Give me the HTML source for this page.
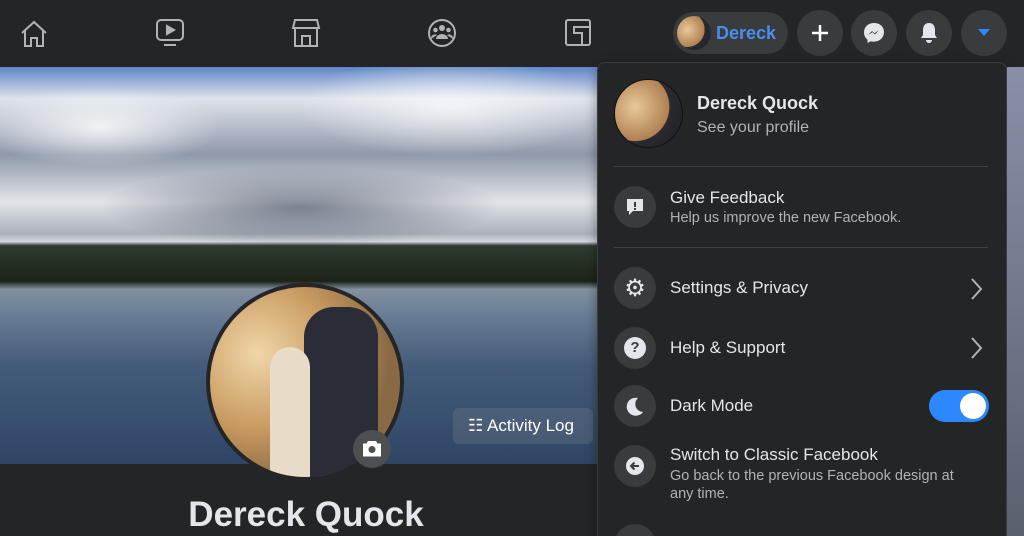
<!DOCTYPE html><html><head><style>
*{margin:0;padding:0;box-sizing:border-box}
html,body{width:1024px;height:536px;overflow:hidden}
body{background:#242526;font-family:"Liberation Sans",sans-serif;position:relative;color:#e4e6eb}
.abs{position:absolute}
.cover{left:0;top:67px;width:600px;height:397px;background:
radial-gradient(ellipse 120px 40px at 100px 60px,rgba(255,255,255,.8),transparent),
radial-gradient(ellipse 150px 50px at 450px 40px,rgba(255,255,255,.7),transparent),
radial-gradient(ellipse 200px 40px at 300px 140px,rgba(60,70,90,.6),transparent),
linear-gradient(180deg,#5f86c8 0%,#dfe3ea 8%,#9099aa 22%,#e2e4e8 34%,#aab0bb 42%,#d4d7dc 44%,#303a30 45%,#1c2418 54%,#8390a0 56%,#6a7f96 62%,#445c7a 75%,#2f4566 100%)}
.circ{border-radius:50%;background:#3a3b3c}
.avatar{background:radial-gradient(circle at 30% 40%,#e8c89a,#b08050 55%,#2a2a30 56%,#1c1c24)}
.row{left:614px;display:flex;align-items:center}
.ic{width:42px;height:42px;border-radius:50%;background:#3a3b3c;margin-right:14px;display:flex;align-items:center;justify-content:center;flex:none}
.t{font-size:17px;color:#e4e6eb}
.s{font-size:14.5px;color:#b0b3b8;margin-top:2px}
</style></head><body>
<svg class="abs" style="left:18px;top:18px" width="32" height="32" viewBox="0 0 32 32" fill="none" stroke="#b0b3b8" stroke-width="2"><path d="M4 15 L16 4 L28 15 M7 13 V28 H13 V20 H19 V28 H25 V13"/></svg>
<svg class="abs" style="left:154px;top:18px" width="32" height="30" viewBox="0 0 32 30" fill="none" stroke="#b0b3b8" stroke-width="2"><rect x="3" y="2" width="26" height="20" rx="4"/><path d="M10 27H22"/><path d="M13 8 L20 12 L13 16Z" fill="#b0b3b8"/></svg>
<svg class="abs" style="left:290px;top:18px" width="32" height="30" viewBox="0 0 32 30" fill="none" stroke="#b0b3b8" stroke-width="2"><path d="M5 2H27L29 10H3Z M5 11V28H27V11 M12 28V18H20V28"/></svg>
<svg class="abs" style="left:426px;top:17px" width="32" height="32" viewBox="0 0 32 32"><circle cx="16" cy="16" r="13" fill="none" stroke="#b0b3b8" stroke-width="2"/><circle cx="16" cy="11" r="3" fill="#b0b3b8"/><circle cx="9.5" cy="13" r="2.3" fill="#b0b3b8"/><circle cx="22.5" cy="13" r="2.3" fill="#b0b3b8"/><path d="M10 22a6 5 0 0 1 12 0Z M5 22a4 4 0 0 1 6-4 M27 22a4 4 0 0 0-6-4" fill="#b0b3b8"/></svg>
<svg class="abs" style="left:564px;top:18px" width="28" height="30" viewBox="0 0 28 30" fill="none" stroke="#b0b3b8" stroke-width="2"><rect x="2" y="2" width="24" height="25" rx="2"/><path d="M18 27V15H10V9H26"/></svg>
<div class="abs" style="left:673px;top:12px;width:115px;height:42px;border-radius:21px;background:#3a3b3c"></div>
<div class="abs circ avatar" style="left:677px;top:16px;width:34px;height:34px"></div>
<div class="abs" style="left:716px;top:23px;font-size:18px;font-weight:bold;color:#4a8ef0">Dereck</div>
<div class="abs circ" style="left:797px;top:10px;width:46px;height:46px"></div>
<svg class="abs" style="left:810px;top:23px" width="20" height="20" viewBox="0 0 20 20"><path d="M10 2V18M2 10H18" stroke="#fff" stroke-width="2.5"/></svg>
<div class="abs circ" style="left:851px;top:10px;width:46px;height:46px"></div>
<svg class="abs" style="left:863px;top:22px" width="22" height="22" viewBox="0 0 22 22"><path d="M11 1C5 1 1 5 1 10.5c0 3 1.3 5.5 3.5 7.2V21l3.3-1.8c1 .3 2 .4 3.2.4 6 0 10-4.3 10-9.6S17 1 11 1z" fill="#e4e6eb"/><path d="M5 13l4-4 2.5 2.3L16 8l-4 4.5-2.5-2.3z" fill="#3a3b3c"/></svg>
<div class="abs circ" style="left:906px;top:10px;width:46px;height:46px"></div>
<svg class="abs" style="left:919px;top:22px" width="20" height="22" viewBox="0 0 20 22"><path d="M10 1C6 1 4 4 4 8v5l-2 3h16l-2-3V8c0-4-2-7-6-7z M7 18a3 3 0 0 0 6 0z" fill="#e4e6eb"/></svg>
<div class="abs circ" style="left:961px;top:10px;width:46px;height:46px"></div>
<svg class="abs" style="left:977px;top:28px" width="14" height="9" viewBox="0 0 14 9"><path d="M1 1H13L7 8Z" fill="#2d88ff"/></svg>
<div class="abs cover"></div>
<div class="abs" style="left:453px;top:408px;width:140px;height:36px;background:rgba(120,130,140,.3);border-radius:6px"></div>
<div class="abs" style="left:468px;top:416px;font-size:17px;color:#fff">☷ Activity Log</div>
<div class="abs" style="left:0;top:464px;width:600px;height:72px;background:#242526"></div>
<div class="abs" style="left:206px;top:283px;width:198px;height:198px;border:4px solid #242526;border-radius:50%;overflow:hidden;background:radial-gradient(circle at 25% 35%,#f0d7a8,#c89a60 40%,#8a6a44 70%)">
<div class="abs" style="left:94px;top:20px;width:74px;height:190px;background:#2a2c38;border-radius:30px 30px 0 0"></div>
<div class="abs" style="left:60px;top:60px;width:40px;height:140px;background:#e8dcc8;border-radius:20px 20px 0 0"></div>
</div>
<div class="abs circ" style="left:353px;top:430px;width:38px;height:38px;background:#4e4f50"></div>
<svg class="abs" style="left:362px;top:440px" width="20" height="17" viewBox="0 0 20 17"><path d="M6 1h8l1.5 2.5H19v13H1v-13h3.5z" fill="#fff"/><circle cx="10" cy="9.5" r="3.5" fill="#4e4f50"/></svg>
<div class="abs" style="left:0;top:495px;width:612px;text-align:center;font-size:35px;font-weight:bold;color:#e4e6eb">Dereck Quock</div>
<div class="abs" style="left:597px;top:62px;width:410px;height:490px;background:#242526;border:1px solid #3a3b3c;border-radius:8px;box-shadow:0 4px 12px rgba(0,0,0,.4)"></div>
<div class="abs" style="left:1007px;top:67px;width:17px;height:469px;background:linear-gradient(#8a8fa8,#5a6070)"></div>
<div class="abs circ avatar" style="left:614px;top:79px;width:69px;height:69px;border:1px solid #111"></div>
<div class="abs" style="left:697px;top:93px;font-size:18px;font-weight:bold">Dereck Quock</div>
<div class="abs" style="left:697px;top:119px;font-size:16px;color:#b0b3b8">See your profile</div>
<div class="abs" style="left:614px;top:166px;width:374px;height:1px;background:#3e4042"></div>
<div class="abs row" style="top:186px"><div class="ic"><svg width="20" height="20" viewBox="0 0 20 20"><path d="M2 2h16v12H8l-4 4v-4H2z" fill="#e4e6eb"/><rect x="9" y="5" width="2" height="5" fill="#3a3b3c"/><rect x="9" y="11" width="2" height="2" fill="#3a3b3c"/></svg></div><div><div class="t">Give Feedback</div><div class="s">Help us improve the new Facebook.</div></div></div>
<div class="abs" style="left:614px;top:247px;width:374px;height:1px;background:#3e4042"></div>
<div class="abs row" style="top:267px"><div class="ic"><span style="font-size:24px;color:#e4e6eb">⚙</span></div><div class="t">Settings &amp; Privacy</div></div>
<svg class="abs" style="left:968px;top:277px" width="16" height="24" viewBox="0 0 16 24"><path d="M4 2l9 10-9 10" stroke="#b0b3b8" stroke-width="2" fill="none"/></svg>
<div class="abs row" style="top:327px"><div class="ic"><div style="width:22px;height:22px;border-radius:50%;background:#e4e6eb;color:#3a3b3c;font-weight:bold;font-size:15px;text-align:center;line-height:22px">?</div></div><div class="t">Help &amp; Support</div></div>
<svg class="abs" style="left:968px;top:336px" width="16" height="24" viewBox="0 0 16 24"><path d="M4 2l9 10-9 10" stroke="#b0b3b8" stroke-width="2" fill="none"/></svg>
<div class="abs row" style="top:385px"><div class="ic"><svg width="20" height="20" viewBox="0 0 20 20"><path d="M13 2a9 9 0 1 0 5 14A8 8 0 0 1 13 2z" fill="#e4e6eb"/></svg></div><div class="t">Dark Mode</div></div>
<div class="abs" style="left:929px;top:390px;width:60px;height:32px;border-radius:16px;background:#2d88ff"></div>
<div class="abs" style="left:960px;top:393px;width:26px;height:26px;border-radius:50%;background:#fff"></div>
<div class="abs row" style="top:445px;align-items:flex-start"><div class="ic"><svg width="20" height="20" viewBox="0 0 20 20"><circle cx="10" cy="10" r="9" fill="#e4e6eb"/><path d="M14 10H6M9.5 6.5 6 10l3.5 3.5" stroke="#3a3b3c" stroke-width="2" fill="none"/></svg></div><div><div class="t">Switch to Classic Facebook</div><div class="s" style="width:310px;line-height:18px">Go back to the previous Facebook design at any time.</div></div></div>
<div class="abs circ" style="left:614px;top:524px;width:42px;height:42px"></div>
</body></html>
